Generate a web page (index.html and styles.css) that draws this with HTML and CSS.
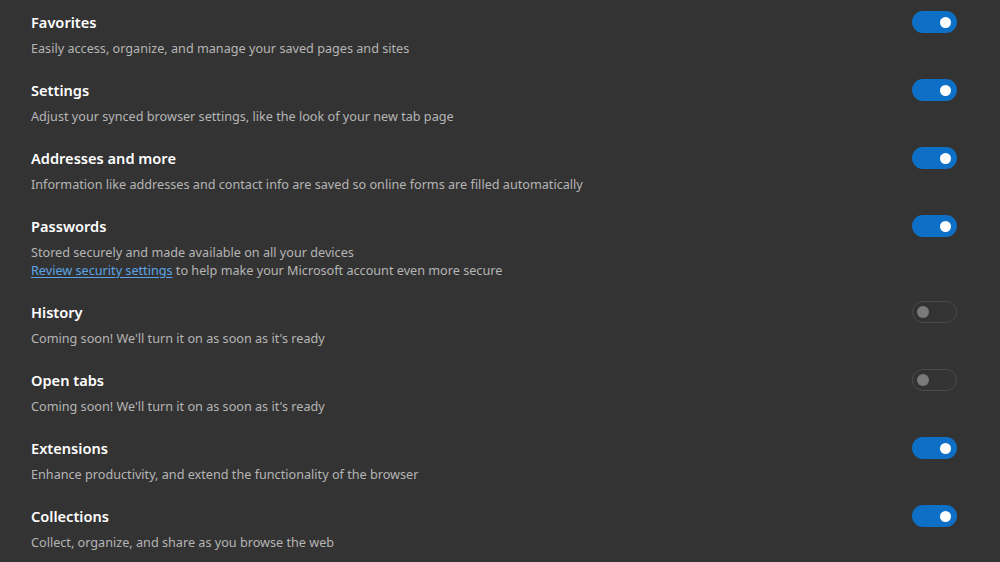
FILE: index.html
```html
<!DOCTYPE html>
<html lang="en">
<head>
<meta charset="utf-8">
<title>Sync settings</title>
<link rel="stylesheet" href="styles.css">
</head>
<body>
<main class="list">
  <section class="row">
    <div class="text">
      <div class="title">Favorites</div>
      <div class="desc">Easily access, organize, and manage your saved pages and sites</div>
    </div>
    <span class="toggle on"><span class="knob"></span></span>
  </section>
  <section class="row">
    <div class="text">
      <div class="title">Settings</div>
      <div class="desc">Adjust your synced browser settings, like the look of your new tab page</div>
    </div>
    <span class="toggle on"><span class="knob"></span></span>
  </section>
  <section class="row">
    <div class="text">
      <div class="title">Addresses and more</div>
      <div class="desc">Information like addresses and contact info are saved so online forms are filled automatically</div>
    </div>
    <span class="toggle on"><span class="knob"></span></span>
  </section>
  <section class="row">
    <div class="text">
      <div class="title">Passwords</div>
      <div class="desc">Stored securely and made available on all your devices</div>
      <div class="desc"><a class="link" href="#">Review security settings</a> to help make your Microsoft account even more secure</div>
    </div>
    <span class="toggle on"><span class="knob"></span></span>
  </section>
  <section class="row">
    <div class="text">
      <div class="title">History</div>
      <div class="desc">Coming soon! We'll turn it on as soon as it's ready</div>
    </div>
    <span class="toggle off"><span class="knob"></span></span>
  </section>
  <section class="row">
    <div class="text">
      <div class="title">Open tabs</div>
      <div class="desc">Coming soon! We'll turn it on as soon as it's ready</div>
    </div>
    <span class="toggle off"><span class="knob"></span></span>
  </section>
  <section class="row">
    <div class="text">
      <div class="title">Extensions</div>
      <div class="desc">Enhance productivity, and extend the functionality of the browser</div>
    </div>
    <span class="toggle on"><span class="knob"></span></span>
  </section>
  <section class="row">
    <div class="text">
      <div class="title">Collections</div>
      <div class="desc">Collect, organize, and share as you browse the web</div>
    </div>
    <span class="toggle on"><span class="knob"></span></span>
  </section>
</main>
</body>
</html>
```
FILE: styles.css
```css
html, body {
  margin: 0;
  padding: 0;
  background: #333333;
  height: 100%;
  overflow: hidden;
}
body {
  font-family: "Noto Sans", "Open Sans", sans-serif;
  color: #ffffff;
}
.list {
  display: flex;
  flex-direction: column;
  padding: 0 43px 0 31px;
}
.row {
  display: flex;
  align-items: flex-start;
  justify-content: space-between;
  padding: 12px 0 11px;
}
.text {
  display: flex;
  flex-direction: column;
}
.title {
  font-size: 14.6px;
  font-weight: 600;
  line-height: 20px;
  color: #ffffff;
  margin-bottom: 7px;
}
.desc {
  font-size: 12.65px;
  line-height: 18px;
  color: #b5b5b5;
}
.link {
  color: #5aa3e6;
  text-decoration: underline;
  text-underline-offset: 2px;
}
.toggle {
  box-sizing: border-box;
  width: 45px;
  height: 22px;
  margin-top: -1px;
  border-radius: 11px;
  display: flex;
  align-items: center;
  flex-shrink: 0;
}
.toggle.on {
  background: #0e6fc6;
  justify-content: flex-end;
  padding-right: 6px;
}
.toggle.off {
  border: 1px solid #4a4a4a;
  background: transparent;
  justify-content: flex-start;
  padding-left: 4px;
}
.knob {
  width: 11px;
  height: 11px;
  border-radius: 50%;
}
.toggle.on .knob {
  background: #ffffff;
}
.toggle.off .knob {
  width: 12px;
  height: 12px;
  background: #7a7a7a;
}
```
